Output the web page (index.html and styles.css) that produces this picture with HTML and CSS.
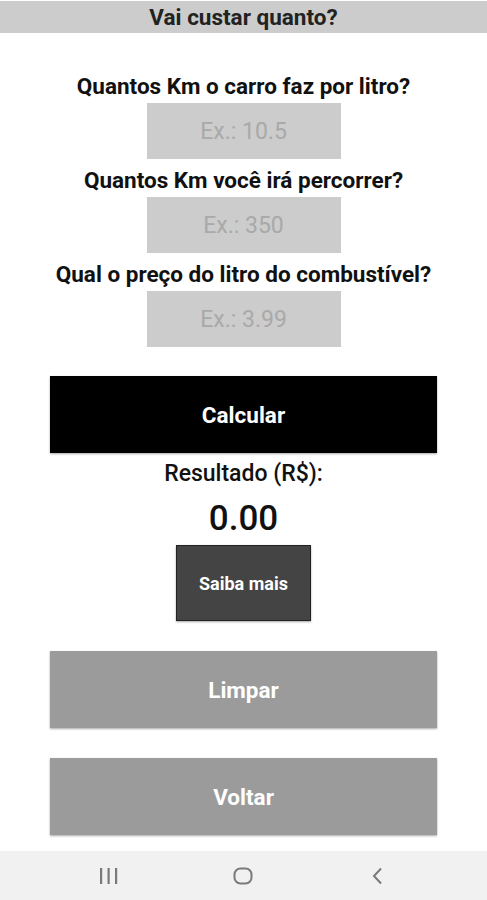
FILE: index.html
```html
<!DOCTYPE html>
<html lang="pt-BR">
<head>
  <meta charset="UTF-8" />
  <meta name="viewport" content="width=device-width, initial-scale=1.0"/>
  <title>Vai custar quanto?</title>
  <link rel="stylesheet" href="styles.css">
</head>
<body>
  <div class="topbar">Vai custar quanto?</div>

  <div class="form">
    <label for="kmLitro">Quantos Km o carro faz por litro?</label>
    <input type="text" id="kmLitro" placeholder="Ex.: 10.5"/>

    <label for="distancia">Quantos Km você irá percorrer?</label>
    <input type="text" id="distancia" placeholder="Ex.: 350"/>

    <label for="preco">Qual o preço do litro do combustível?</label>
    <input type="text" id="preco" placeholder="Ex.: 3.99"/>

    <button class="btn btn-calc" id="calcular">Calcular</button>

    <div class="result-label">Resultado (R$):</div>
    <div class="result" id="resultado">0.00</div>

    <button class="btn btn-info">Saiba mais</button>

    <button class="btn btn-gray btn-clear" id="limpar">Limpar</button>
    <button class="btn btn-gray btn-back">Voltar</button>
  </div>

  <div class="navbar">
    <svg width="22" height="18" viewBox="0 0 22 18">
      <rect x="2" y="1" width="2.2" height="16" fill="#7a7a7a"/>
      <rect x="9.5" y="1" width="2.2" height="16" fill="#7a7a7a"/>
      <rect x="17" y="1" width="2.2" height="16" fill="#7a7a7a"/>
    </svg>
    <svg width="22" height="18" viewBox="0 0 22 18">
      <rect x="2.5" y="1.5" width="17" height="15" rx="6" fill="none" stroke="#7a7a7a" stroke-width="2"/>
    </svg>
    <svg width="22" height="18" viewBox="0 0 22 18">
      <path d="M15 1.5 L8 9 L15 16.5" fill="none" stroke="#7a7a7a" stroke-width="2"/>
    </svg>
  </div>

  <script>
    document.getElementById("calcular").addEventListener("click", () => {
      const km = parseFloat(document.getElementById("kmLitro").value);
      const dist = parseFloat(document.getElementById("distancia").value);
      const preco = parseFloat(document.getElementById("preco").value);
      const total = (dist / km) * preco;
      document.getElementById("resultado").textContent = isFinite(total) ? total.toFixed(2) : "0.00";
    });

    document.getElementById("limpar").addEventListener("click", () => {
      document.querySelectorAll("input").forEach(i => i.value = "");
      document.getElementById("resultado").textContent = "0.00";
    });
  </script>
</body>
</html>
```

FILE: styles.css
```css
body { margin: 0; font-family: Roboto, "Noto Sans", Arial, sans-serif; background: #fff; color: #111; width: 487px; height: 900px; position: relative; }
.topbar { margin-top: 1px; height: 32px; line-height: 32px; background: #cccccc; text-align: center; font-size: 22.5px; font-weight: 700; color: #222; }
.form { display: flex; flex-direction: column; align-items: center; padding-top: 40px; }
label { font-size: 22.5px; font-weight: 700; line-height: 26px; margin-bottom: 4px; }
input { width: 194px; height: 56px; box-sizing: border-box; border: none; background: #cccccc; text-align: center; font-family: inherit; font-size: 23px; margin-bottom: 8px; outline: none; }
input::placeholder { color: #a9a9a9; }
.btn { border: none; font-family: inherit; font-weight: 700; color: #fff; box-shadow: 0 1px 2px rgba(0,0,0,0.35); cursor: pointer; }
.btn-calc { width: 387px; height: 77px; background: #000; font-size: 22.5px; margin-top: 21px; }
.result-label { font-size: 23px; font-weight: 500; line-height: 26px; margin-top: 8px; }
.result { font-size: 35px; font-weight: 500; line-height: 40px; margin-top: 12px; }
.btn-info { width: 135px; height: 76px; background: #444; border: 1px solid #222; font-size: 18px; margin-top: 6px; }
.btn-gray { width: 387px; height: 77px; background: #9b9b9b; font-size: 22.5px; }
.btn-clear { margin-top: 30px; }
.btn-back { margin-top: 30px; }
.navbar { position: absolute; left: 0; right: 0; bottom: 0; height: 49px; background: #f1f1f1; display: flex; justify-content: space-between; align-items: center; padding: 0 99px 0 98px; }
```
